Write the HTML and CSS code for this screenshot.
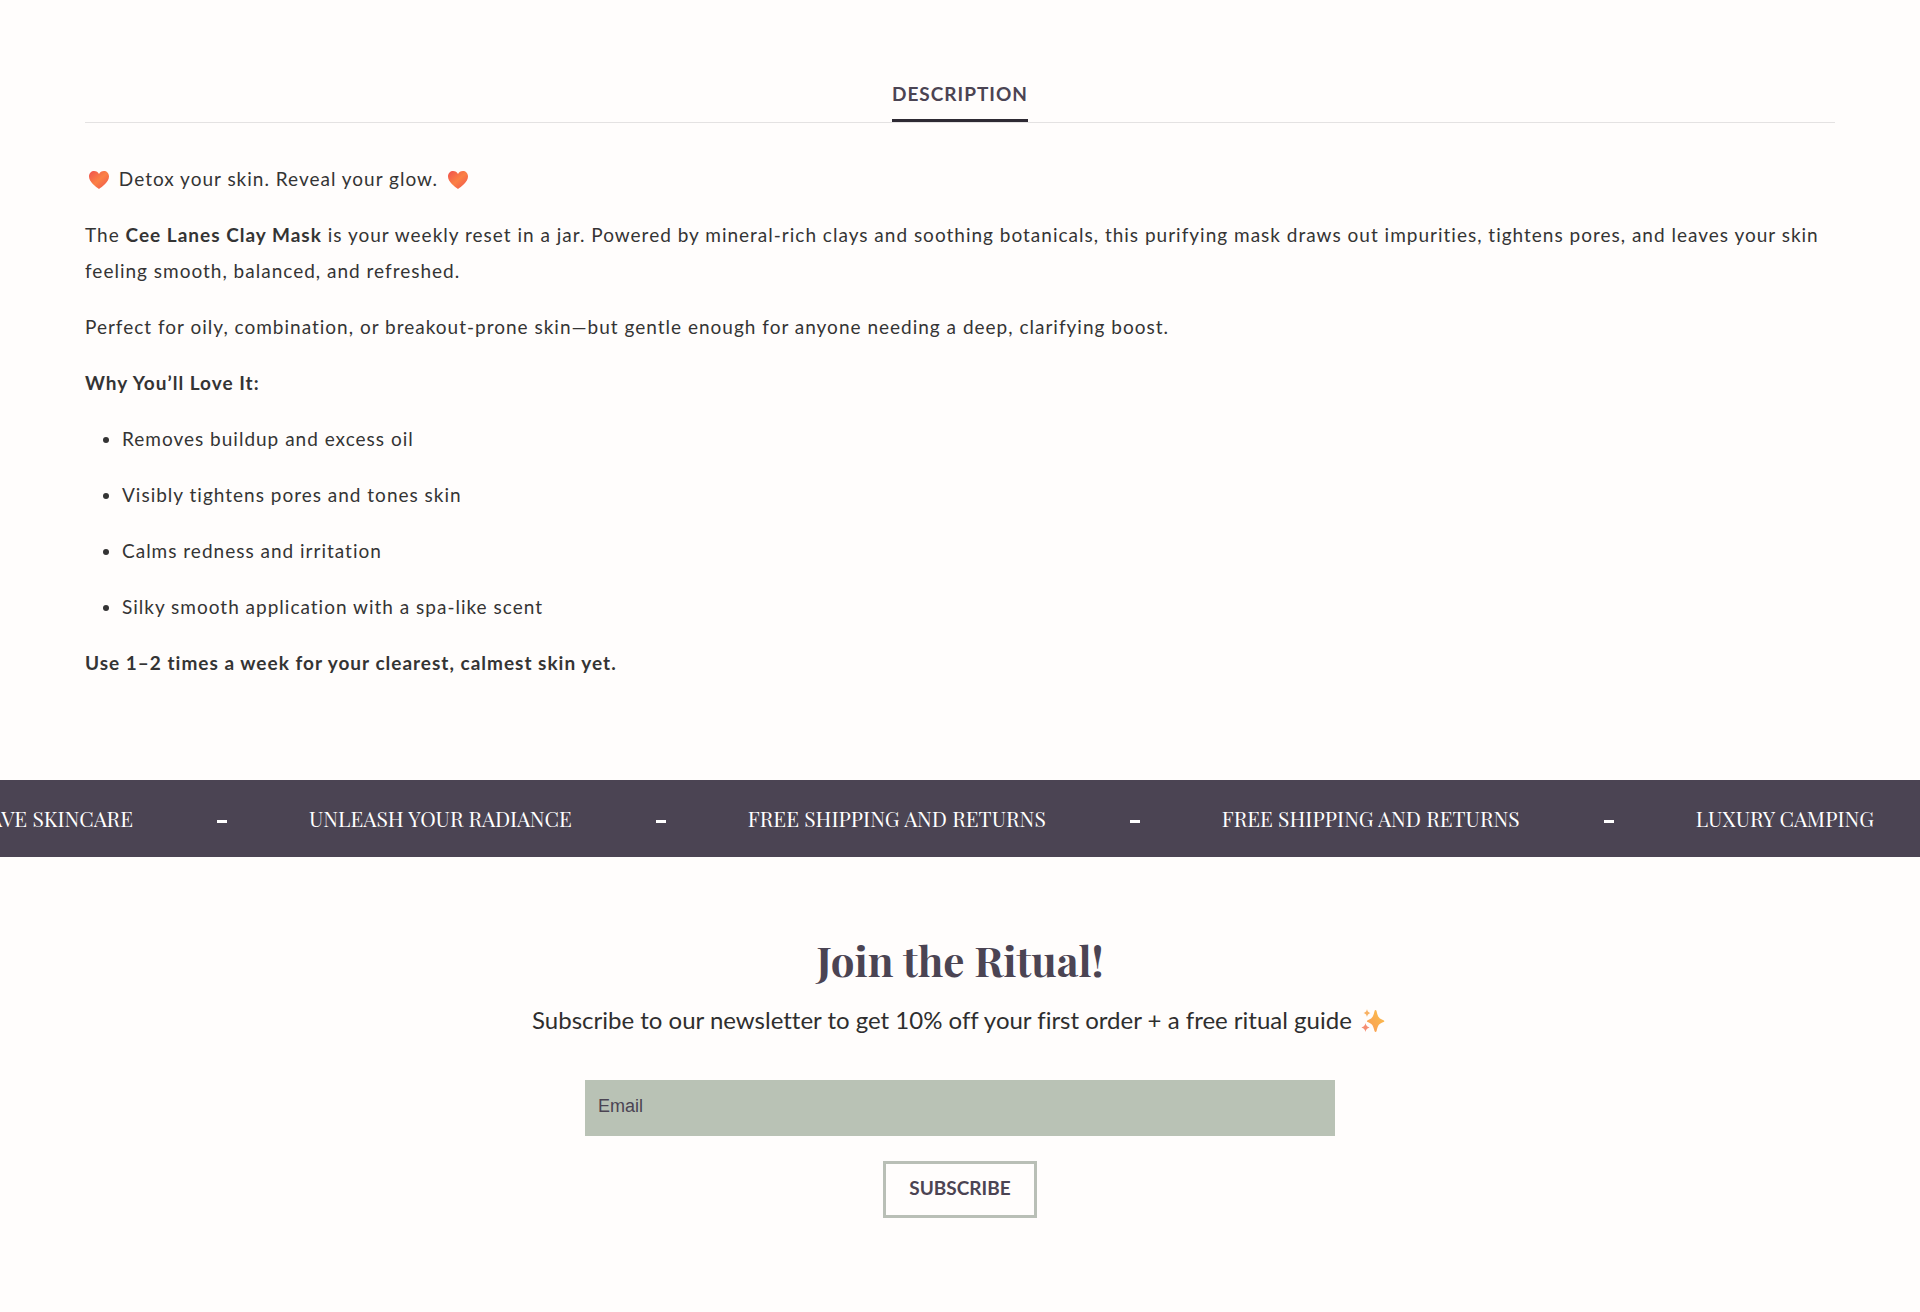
FILE: index.html
```html
<!DOCTYPE html>
<html lang="en">
<head>
<meta charset="utf-8">
<meta name="viewport" content="width=device-width, initial-scale=1">
<title>Cee Lanes Clay Mask</title>
<link rel="stylesheet" href="styles.css">
</head>
<body>
<svg class="defs" aria-hidden="true">
  <defs>
    <linearGradient id="heart-fill" x1="0" y1="0" x2="1" y2="1">
      <stop offset="0" stop-color="#f0504e"/>
      <stop offset="0.5" stop-color="#fb8145"/>
      <stop offset="1" stop-color="#f0504e"/>
    </linearGradient>
    <linearGradient id="spark-fill" x1="1" y1="0" x2="0" y2="1">
      <stop offset="0" stop-color="#fbc04a"/>
      <stop offset="1" stop-color="#f99a55"/>
    </linearGradient>
    <symbol id="heart" viewBox="0 0 22 20">
      <path fill="url(#heart-fill)" d="M11 19C8 17 1 12 1 6.500C1 3 3.500 1 6 1C8.500 1 10 2.300 11 4C12 2.300 13.500 1 16 1C18.500 1 21 3 21 6.500C21 12 14 17 11 19Z"/>
    </symbol>
    <symbol id="sparkles" viewBox="0 0 24 26">
      <path fill="url(#spark-fill)" d="M14.500 2C15 2 15.400 2.500 15.600 3.200C17 9 17.500 10.300 22.500 12.200C23.600 12.700 23.600 13.600 22.500 14.100C17.500 16 17 17.500 15.600 23C15.200 24.400 13.900 24.400 13.500 23C12 17.500 11.500 16 6.700 14.100C5.600 13.600 5.600 12.700 6.700 12.200C11.500 10.300 12 9 13.500 3.200C13.700 2.500 14 2 14.500 2Z"/>
      <path fill="#f8b163" d="M6 1C6.600 3.600 7 4 9.500 5C7 6 6.600 6.400 6 9C5.400 6.400 5 6 2.500 5C5 4 5.400 3.600 6 1Z"/>
      <path fill="#f58d72" d="M4.500 15C5.200 17.800 5.700 18.300 8.500 19.500C5.700 20.700 5.200 21.200 4.500 24C3.800 21.200 3.300 20.700 .5 19.500C3.300 18.300 3.800 17.800 4.500 15Z"/>
    </symbol>
  </defs>
</svg>

<main>
  <section class="details">
    <div class="tabs" role="tablist">
      <button class="tab" type="button" role="tab" id="tab-description" aria-selected="true" aria-controls="description">DESCRIPTION</button>
    </div>
    <div class="description" id="description" role="tabpanel" aria-labelledby="tab-description">
      <p><svg class="heart" aria-hidden="true"><use href="#heart"/></svg> Detox your skin. Reveal your glow. <svg class="heart" aria-hidden="true"><use href="#heart"/></svg></p>
      <p>The <strong>Cee Lanes Clay Mask</strong> is your weekly reset in a jar. Powered by mineral-rich clays and soothing botanicals, this purifying mask draws out impurities, tightens pores, and leaves your skin feeling smooth, balanced, and refreshed.</p>
      <p>Perfect for oily, combination, or breakout-prone skin—but gentle enough for anyone needing a deep, clarifying boost.</p>
      <p><strong>Why You’ll Love It:</strong></p>
      <ul>
        <li>Removes buildup and excess oil</li>
        <li>Visibly tightens pores and tones skin</li>
        <li>Calms redness and irritation</li>
        <li>Silky smooth application with a spa-like scent</li>
      </ul>
      <p><strong>Use 1–2 times a week for your clearest, calmest skin yet.</strong></p>
    </div>
  </section>

  <section class="ticker" aria-label="Highlights">
    <ul class="ticker-track">
      <li>CRAVE SKINCARE</li>
      <li>UNLEASH YOUR RADIANCE</li>
      <li>FREE SHIPPING AND RETURNS</li>
      <li>FREE SHIPPING AND RETURNS</li>
      <li>LUXURY CAMPING</li>
    </ul>
  </section>

  <section class="newsletter">
    <h2>Join the Ritual!</h2>
    <p class="pitch">Subscribe to our newsletter to get 10% off your first order + a free ritual guide <svg class="sparkles" aria-hidden="true"><use href="#sparkles"/></svg></p>
    <form class="signup">
      <input class="email" type="email" name="email" placeholder="Email" aria-label="Email">
      <button class="subscribe" type="submit">SUBSCRIBE</button>
    </form>
  </section>
</main>
</body>
</html>
```
FILE: styles.css
```css
* {
  box-sizing: border-box;
}

body {
  margin: 0;
  background: #fffdfc;
  color: #343434;
  font-family: Lato, "Liberation Sans", sans-serif;
  font-size: 19px;
  line-height: 36px;
}

.defs {
  position: absolute;
  width: 0;
  height: 0;
}

.details {
  padding: 70px 85px 99px;
}

.tabs {
  display: flex;
  justify-content: center;
  border-bottom: 1px solid #e4e2e2;
}

.tab {
  padding: 7px 0 8px;
  border: 0;
  border-bottom: 3px solid #2e2a33;
  background: none;
  color: #4b4453;
  font-family: inherit;
  font-size: 19px;
  font-weight: 700;
  letter-spacing: 1px;
  line-height: 34px;
}

.description {
  padding-top: 38px;
  letter-spacing: 1px;
}

.description p,
.description ul,
.description li {
  margin: 0 0 20px;
}

.description ul {
  padding-left: 37px;
}

.description > :last-child {
  margin-bottom: 0;
}

.heart {
  width: 22px;
  height: 20px;
  margin: 0 3px;
  vertical-align: -4px;
}

.ticker {
  overflow: hidden;
  background: #4b4453;
  color: #fff;
}

.ticker-track {
  display: flex;
  justify-content: flex-end;
  gap: 82px;
  margin: 0;
  padding: 20px 46px 21px;
  list-style: none;
  font-family: "Playfair Display", "Liberation Serif", serif;
  font-size: 21px;
  white-space: nowrap;
}

.ticker-track li {
  display: flex;
  align-items: center;
  gap: 84px;
}

.ticker-track li:not(:last-child)::after {
  content: "";
  width: 10px;
  height: 3px;
  margin-top: 6px;
  background: #fff;
}

.newsletter {
  padding: 71px 24px 94px;
  text-align: center;
}

.newsletter h2 {
  margin: 0;
  color: #4b4453;
  font-family: "Playfair Display", "Liberation Serif", serif;
  font-size: 42px;
  line-height: 64px;
}

.pitch {
  margin: 10px 0 42px;
  font-size: 24px;
  font-variant-ligatures: none;
  color: #2e2e2e;
}

.sparkles {
  width: 24px;
  height: 26px;
  margin: 0 3px;
  vertical-align: -5px;
}

.signup {
  display: flex;
  flex-direction: column;
  align-items: center;
  gap: 25px;
}

.email {
  width: 100%;
  max-width: 750px;
  height: 56px;
  padding: 8px 13px 12px;
  border: 0;
  border-radius: 0;
  background: #b9c2b5;
  color: #4b4453;
  font-family: "Liberation Sans", Arial, sans-serif;
  font-size: 18px;
}

.email::placeholder {
  color: #4b4453;
  opacity: 1;
}

.subscribe {
  height: 57px;
  padding: 0 23px 4px;
  border: 3px solid #b9bfb6;
  background: transparent;
  color: #4b4453;
  font-family: inherit;
  font-size: 19px;
  font-weight: 700;
}
```
